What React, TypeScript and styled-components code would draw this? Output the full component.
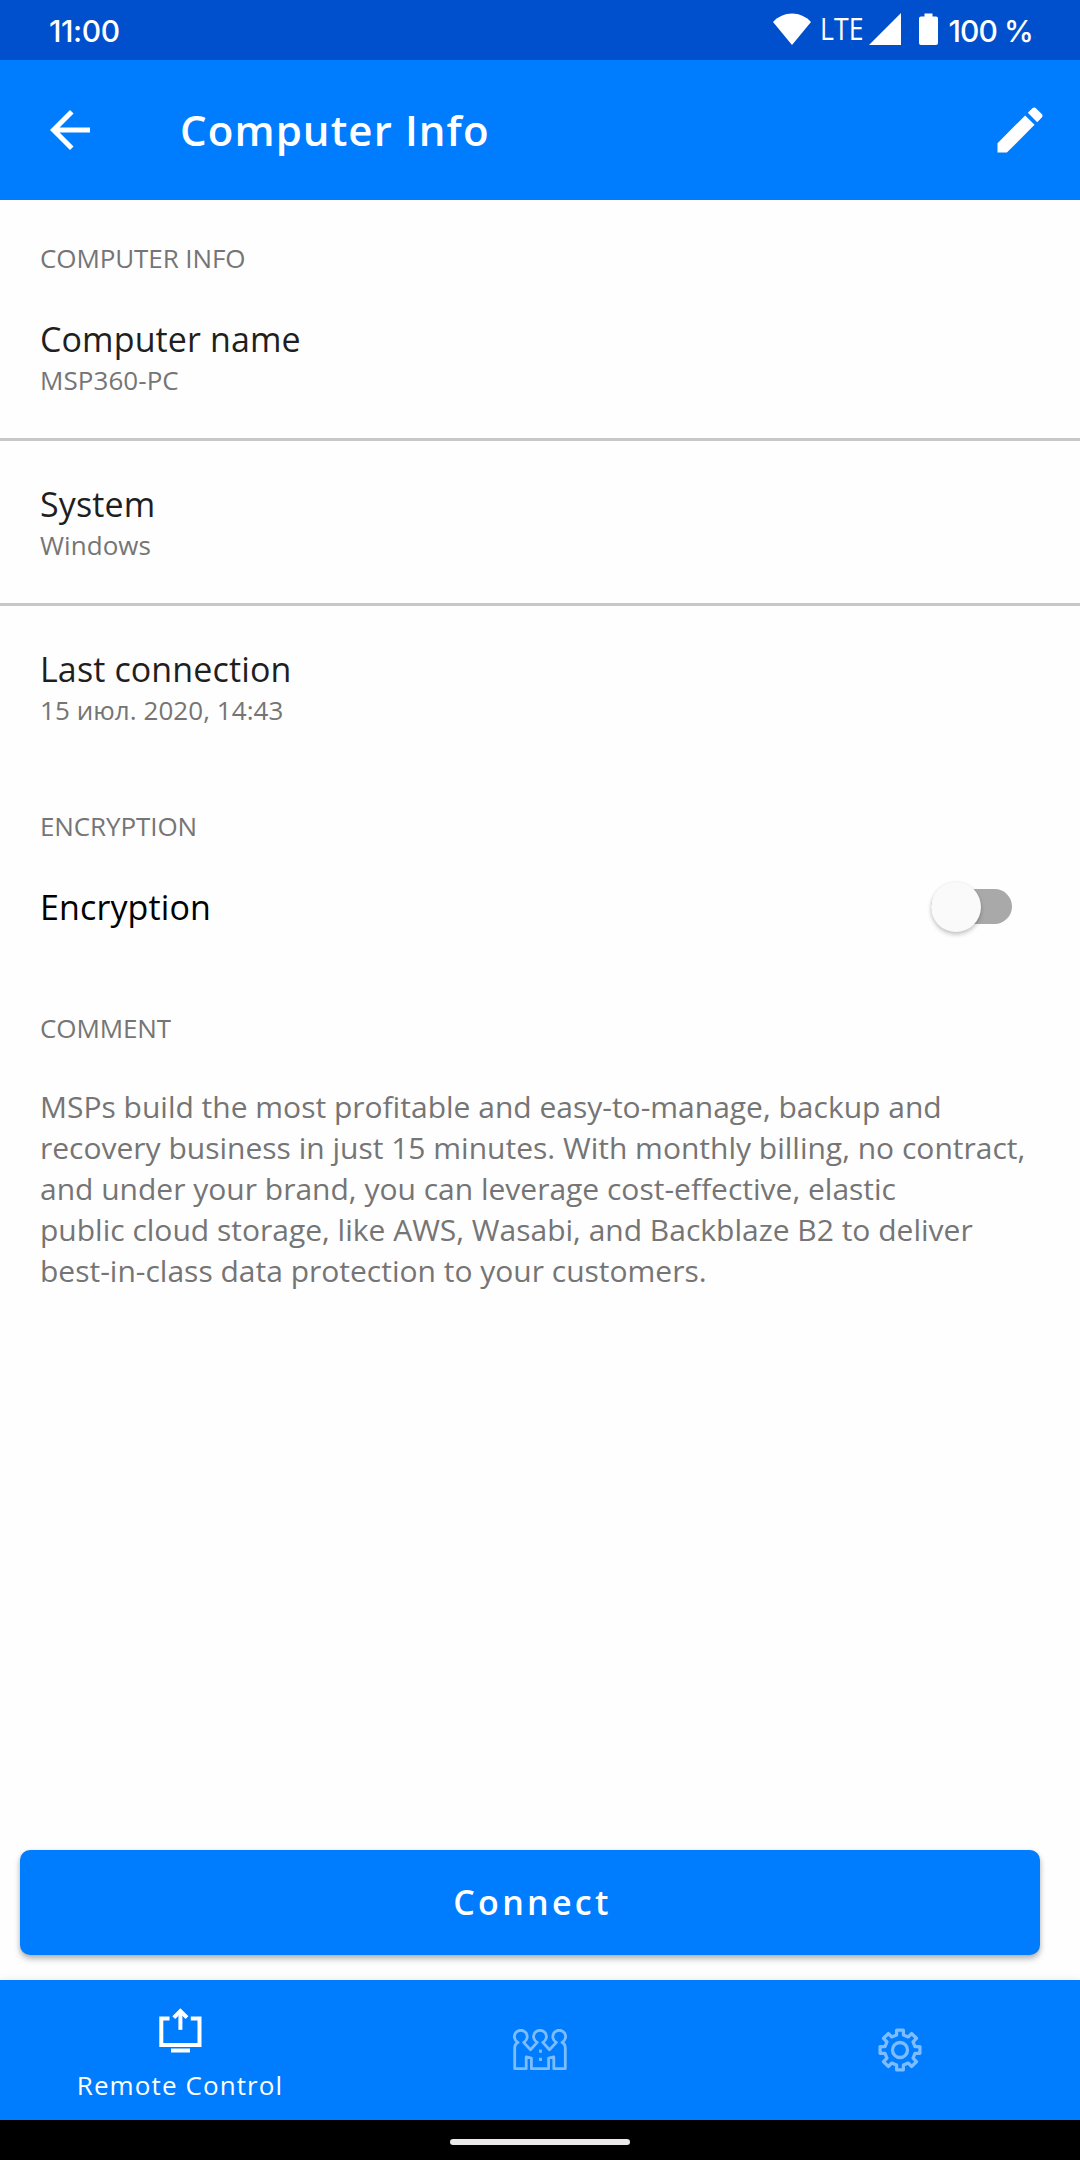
import React from 'react';
import styled, { createGlobalStyle } from 'styled-components';

const BLUE = '#007cff';
const SANS = '"Open Sans", "Noto Sans", sans-serif';

const GlobalStyle = createGlobalStyle`
  *, *::before, *::after { box-sizing: border-box; }
  body { margin: 0; background: #fff; }
  button { font: inherit; color: inherit; border: 0; margin: 0; padding: 0; background: none; }
  svg { display: block; flex: none; }
`;

const Screen = styled.div`
  display: flex;
  flex-direction: column;
  width: 1080px;
  height: 2160px;
  overflow: hidden;
  background: #fefefe;
  font-family: ${SANS};
`;

const StatusBar = styled.header`
  display: flex;
  justify-content: space-between;
  align-items: center;
  height: 60px;
  padding: 0 47px 2px 49px;
  background: #0050cd;
  color: #fff;
`;

const StatusText = styled.span<{ $spacing: number }>`
  padding-top: 3px;
  font: 500 30px/40px Inter, sans-serif;
  letter-spacing: ${p => p.$spacing}px;
  white-space: nowrap;
`;

const StatusIcons = styled.div`
  display: flex;
  align-items: center;
`;

const Network = styled.span`
  margin: 0 5px 0 2px;
  padding-bottom: 2px;
  font: 400 31px/40px ${SANS};
  transform: scaleX(0.86);
  transform-origin: right center;
`;

const Battery = styled.div`
  margin: 0 11px 0 18px;
`;

const AppBar = styled.div`
  display: flex;
  align-items: center;
  height: 140px;
  padding: 0 30px 0 40px;
  background: ${BLUE};
  color: #fff;
`;

const Title = styled.h1`
  flex: 1;
  margin: 0 0 0 80px;
  font-size: 42px;
  line-height: 56px;
  font-weight: 600;
  letter-spacing: 1.1px;
`;

const IconButton = styled.button`
  display: flex;
`;

const Content = styled.main`
  flex: 1;
  display: flex;
  flex-direction: column;
`;

const Section = styled.section`
  padding-top: 40px;
`;

const SectionLabel = styled.h2`
  margin: 0;
  padding: 0 40px;
  font-size: 26px;
  line-height: 36px;
  font-weight: 400;
  letter-spacing: -0.1px;
  color: #757575;
`;

const Item = styled.div<{ $divided?: boolean }>`
  display: flex;
  justify-content: space-between;
  align-items: center;
  padding: 40px;
  ${p => p.$divided && 'border-bottom: 3px solid #c8c8c8;'}
`;

const ItemTitle = styled.div<{ $color?: string }>`
  font-size: 34px;
  line-height: 46px;
  letter-spacing: 0.12px;
  color: ${p => p.$color ?? '#1f1f1f'};
`;

const ItemValue = styled.div`
  font-size: 26px;
  line-height: 36px;
  letter-spacing: 0.06px;
  color: #757575;
`;

const Comment = styled.p`
  margin: 40px 0 0;
  padding: 0 40px;
  font-size: 30px;
  line-height: 41px;
  color: #757575;
  white-space: nowrap;
`;

const Switch = styled.button`
  display: flex;
  align-items: center;
  width: 81px;
  height: 35px;
  margin: -1px 28px 0 0;
  border-radius: 18px;
  background: #a9a9a9;
`;

const Thumb = styled.span`
  flex: none;
  width: 50px;
  height: 50px;
  border-radius: 50%;
  background: #fafafa;
  box-shadow: 0 3px 4px rgba(0, 0, 0, 0.2), 0 0 3px rgba(0, 0, 0, 0.08);
`;

const Actions = styled.div`
  padding: 0 40px 25px 20px;
`;

const ConnectButton = styled.button`
  display: block;
  width: 100%;
  height: 105px;
  padding: 0 0 2px 5px;
  border-radius: 10px;
  background: ${BLUE};
  box-shadow: 0 4px 6px rgba(0, 0, 0, 0.26), 0 1px 4px rgba(0, 0, 0, 0.1);
  color: #fff;
  font-size: 34px;
  line-height: 46px;
  font-weight: 600;
  letter-spacing: 3.3px;
`;

const BottomNav = styled.nav`
  display: flex;
  height: 140px;
  background: ${BLUE};
  box-shadow: 0 -1px 8px rgba(0, 0, 0, 0.07);
`;

const Tab = styled.button<{ $active?: boolean }>`
  flex: 1;
  display: flex;
  flex-direction: column;
  align-items: center;
  justify-content: center;
  padding-top: ${p => (p.$active ? 11 : 0)}px;
  color: ${p => (p.$active ? '#fff' : '#7cbcff')};
`;

const TabLabel = styled.span`
  margin-top: 14px;
  font-size: 26px;
  line-height: 36px;
  letter-spacing: 1.1px;
`;

const GestureBar = styled.footer`
  display: flex;
  align-items: center;
  justify-content: center;
  height: 40px;
  padding-top: 4px;
  background: #000;
`;

const Handle = styled.div`
  width: 180px;
  height: 6px;
  border-radius: 3px;
  background: #ebe9ea;
`;

const WifiIcon = () => (
  <svg width="38" height="32" viewBox="0 0 38 32" fill="currentColor">
    <path d="M0 9C5 3.500 12 .5 19 .5S33 3.500 38 9L19 32Z" />
  </svg>
);

const SignalIcon = () => (
  <svg width="32" height="32" viewBox="0 0 32 32" fill="currentColor">
    <path d="M0 32 32 0V32Z" />
  </svg>
);

const BatteryIcon = () => (
  <svg width="19" height="32" viewBox="0 0 19 32" fill="currentColor">
    <path d="M5.500 .5h8v3h3.500a2 2 0 0 1 2 2V30a2 2 0 0 1-2 2H2a2 2 0 0 1-2-2V5.500a2 2 0 0 1 2-2h3.500Z" />
  </svg>
);

const BackIcon = () => (
  <svg width="60" height="60" viewBox="0 0 24 24" fill="currentColor">
    <path d="M20 11H7.830l5.590-5.590L12 4l-8 8 8 8 1.410-1.410L7.830 13H20v-2z" />
  </svg>
);

const EditIcon = () => (
  <svg width="60" height="60" viewBox="0 0 24 24" fill="currentColor">
    <path d="M3 17.250V21h3.750L17.810 9.940l-3.750-3.750L3 17.250zM20.710 7.040c.39-.39.39-1.020 0-1.410l-2.340-2.340c-.39-.39-1.020-.39-1.410 0l-1.830 1.830 3.750 3.750 1.830-1.830z" />
  </svg>
);

const ShareScreenIcon = () => (
  <svg width="44" height="45" viewBox="0 0 44 45" fill="none" stroke="currentColor" strokeWidth="4">
    <path d="M11.500 10.400H3.300V37H41.500V10.400h-8.700" />
    <path d="M22.400 21.800V4" />
    <path d="M15.800 9.600 22.400 3l6.600 6.600" />
    <path d="M13 42.500h19" />
  </svg>
);

const PeopleIcon = () => (
  <svg width="54" height="42" viewBox="0 0 54 42" fill="none" stroke="currentColor" strokeWidth="2.800" strokeLinejoin="round">
    <path d="M5 13.400a6.400 6.400 0 1 1 5.600 0L17.500 20.700 24.200 13.400a6.400 6.400 0 1 1 5.600 0L36.500 20.700 43.400 13.400a6.400 6.400 0 1 1 5.600 0C51.700 14.500 52.300 16.500 52.300 19.500V39.700H40.800V27.800L35.600 29V39.700H18.400V29L13.200 27.800V39.700H1.700V19.500C1.700 16.500 2.300 14.500 5 13.400Z" />
    <path d="M27.500 20.500v3.200M27.500 28.700v3.200" />
  </svg>
);

const gearOutline = (() => {
  const points: string[] = [];
  for (let i = 0; i < 8; i++) {
    const steps: [number, number][] = [[-13, 15.4], [-9.5, 20.2], [9.5, 20.2], [13, 15.4]];
    steps.forEach(([offset, radius]) => {
      const a = ((i * 45 + offset) * Math.PI) / 180;
      points.push(`${(22 + radius * Math.sin(a)).toFixed(2)} ${(22 - radius * Math.cos(a)).toFixed(2)}`);
    });
  }
  return `M${points.join('L')}Z`;
})();

const GearIcon = () => (
  <svg width="44" height="44" viewBox="0 0 44 44" fill="none" stroke="currentColor" strokeWidth="3.300" strokeLinejoin="round">
    <path d={gearOutline} />
    <circle cx="22" cy="22" r="7.500" />
  </svg>
);

const details = [
  { title: 'Computer name', value: 'MSP360-PC' },
  { title: 'System', value: 'Windows' },
  { title: 'Last connection', value: '15 июл. 2020, 14:43' },
];

export default function App() {
  return (
    <Screen>
      <GlobalStyle />
      <StatusBar>
        <StatusText $spacing={-0.4}>11:00</StatusText>
        <StatusIcons>
          <WifiIcon />
          <Network>LTE</Network>
          <SignalIcon />
          <Battery><BatteryIcon /></Battery>
          <StatusText $spacing={-0.9}>100 %</StatusText>
        </StatusIcons>
      </StatusBar>
      <AppBar>
        <IconButton aria-label="Back"><BackIcon /></IconButton>
        <Title>Computer Info</Title>
        <IconButton aria-label="Edit"><EditIcon /></IconButton>
      </AppBar>
      <Content>
        <Section>
          <SectionLabel>COMPUTER INFO</SectionLabel>
          {details.map((d, i) => (
            <Item key={d.title} $divided={i < details.length - 1}>
              <div>
                <ItemTitle>{d.title}</ItemTitle>
                <ItemValue>{d.value}</ItemValue>
              </div>
            </Item>
          ))}
        </Section>
        <Section>
          <SectionLabel>ENCRYPTION</SectionLabel>
          <Item>
            <ItemTitle $color="#000">Encryption</ItemTitle>
            <Switch role="switch" aria-checked={false} aria-label="Encryption"><Thumb /></Switch>
          </Item>
        </Section>
        <Section>
          <SectionLabel>COMMENT</SectionLabel>
          <Comment>
            MSPs build the most profitable and easy-to-manage, backup and<br />
            recovery business in just 15 minutes. With monthly billing, no contract,<br />
            and under your brand, you can leverage cost-effective, elastic<br />
            public cloud storage, like AWS, Wasabi, and Backblaze B2 to deliver<br />
            best-in-class data protection to your customers.
          </Comment>
        </Section>
      </Content>
      <Actions>
        <ConnectButton>Connect</ConnectButton>
      </Actions>
      <BottomNav>
        <Tab $active>
          <ShareScreenIcon />
          <TabLabel>Remote Control</TabLabel>
        </Tab>
        <Tab aria-label="Contacts"><PeopleIcon /></Tab>
        <Tab aria-label="Settings"><GearIcon /></Tab>
      </BottomNav>
      <GestureBar><Handle /></GestureBar>
    </Screen>
  );
}
